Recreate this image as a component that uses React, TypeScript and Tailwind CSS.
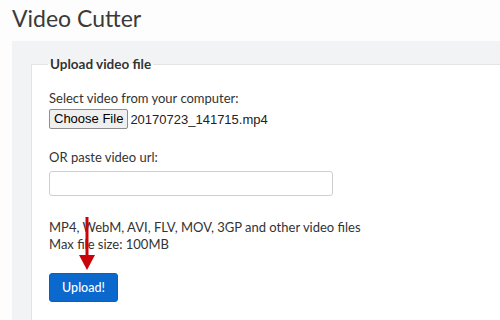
import React from 'react';

const App: React.FC = () => {
  return (
    <div className="relative w-[500px] h-[320px] overflow-hidden bg-[#fdfdfd] text-[#333] font-['Lato','Open_Sans',sans-serif]">
      <h1 className="pl-[12px] pt-[3px] h-[41px] text-[23px] leading-[30px] text-[#3a3a3a]">Video Cutter</h1>

      <div className="ml-[12px] w-[600px] h-[300px] bg-[#f2f3f5] pl-[19px] pt-[15px]">
        <fieldset className="border border-[#e3e4e6] bg-white h-[300px] pl-[17px] pr-4">
          <legend className="px-[2px] -ml-[1px] text-[13.5px] leading-[16px] font-bold text-[#333]">Upload video file</legend>

          <div className="pt-[18px] text-[13px] leading-[17px]">
            <label className="block">Select video from your computer:</label>
            <div className="flex items-center gap-[2px] mt-[2px] font-['Liberation_Sans',Arial,sans-serif] text-[13px]">
              <button className="h-[20px] px-[4px] border border-[#8e8e8e] rounded-[2px] bg-[#efefef] text-[13px] leading-[18px] text-black">
                Choose File
              </button>
              <span className="text-[#222]">20170723_141715.mp4</span>
            </div>

            <label className="block mt-[20px]">OR paste video url:</label>
            <input
              type="text"
              className="block mt-[5px] w-[284px] h-[25px] border border-[#cfcfcf] rounded-[3px] bg-white"
            />

            <p className="mt-[23px]">MP4, WebM, AVI, FLV, MOV, 3GP and other video files</p>
            <p>Max file size: 100MB</p>

            <button className="mt-[20px] w-[69px] h-[29px] rounded-[3px] bg-[#0b68cc] text-white text-[12.5px] font-medium border border-[#0a5fb8]">
              Upload!
            </button>
          </div>
        </fieldset>
      </div>

      <svg className="absolute left-0 top-0 pointer-events-none" width="500" height="320">
        <line x1="87" y1="217" x2="87" y2="258" stroke="#c8040a" strokeWidth="3" />
        <polygon points="79,255 95,255 87,270" fill="#c8040a" />
      </svg>
    </div>
  );
};

export default App;
